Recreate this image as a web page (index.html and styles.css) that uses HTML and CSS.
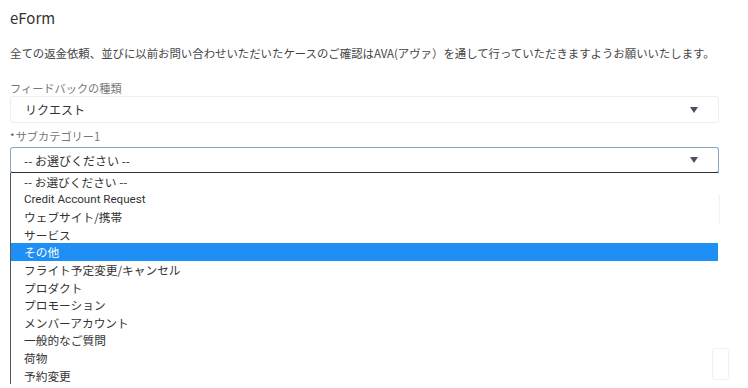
FILE: index.html
```html
<!DOCTYPE html>
<html lang="ja">
<head>
<meta charset="utf-8">
<link rel="stylesheet" href="styles.css">
</head>
<body>
<div class="page">
  <h1 class="title">eForm</h1>
  <p class="notice">全ての返金依頼、並びに以前お問い合わせいただいたケースのご確認はAVA(アヴァ）を通して行っていただきますようお願いいたします。</p>
  <div class="field">
    <label class="label">フィードバックの種類</label>
    <div class="select">
      <span>リクエスト</span>
      <span class="arrow"></span>
    </div>
  </div>
  <div class="field field-2">
    <label class="label"><span class="req">*</span>サブカテゴリー1</label>
    <div class="select select-focus">
      <span>-- お選びください --</span>
      <span class="arrow"></span>
    </div>
    <div class="behind"></div>
    <ul class="options">
      <li>-- お選びください --</li>
      <li class="latin">Credit Account Request</li>
      <li>ウェブサイト/携帯</li>
      <li>サービス</li>
      <li class="active">その他</li>
      <li>フライト予定変更/キャンセル</li>
      <li>プロダクト</li>
      <li>プロモーション</li>
      <li>メンバーアカウント</li>
      <li>一般的なご質問</li>
      <li>荷物</li>
      <li>予約変更</li>
    </ul>
  </div>
  <div class="corner"></div>
</div>
</body>
</html>
```
FILE: styles.css
```css
html, body {
  margin: 0;
  padding: 0;
  background: #fff;
  overflow: hidden;
}
body {
  width: 748px;
  height: 388px;
  font-family: "Noto Sans CJK JP", "Noto Sans", sans-serif;
  color: #333;
}
.page {
  position: relative;
  padding: 8px 29px 0 10px;
}
.title {
  margin: 0;
  font-size: 15px;
  font-weight: 400;
  line-height: 20px;
  color: #333;
}
.notice {
  margin: 16px 0 0;
  font-size: 11.4px;
  line-height: 18px;
  color: #444;
  white-space: nowrap;
}
.field {
  margin-top: 18px;
}
.field-2 {
  margin-top: 5px;
  position: relative;
}
.label {
  display: block;
  font-size: 11.2px;
  line-height: 16px;
  color: #777;
}
.req {
  color: #555;
  font-size: 10px;
  margin-right: 1px;
}
.select {
  margin-top: 0;
  height: 25px;
  border: 1px solid #eee;
  border-radius: 3px;
  display: flex;
  align-items: center;
  justify-content: space-between;
  padding: 0 20px 0 14px;
  font-size: 12px;
  color: #333;
}
.select-focus {
  margin-top: 2px;
  border-color: #8aa7c4 #8aa7c4 #333 #8aa7c4;
  border-width: 1px 1px 2px 1px;
  height: 24px;
  padding-left: 13px;
}
.arrow {
  width: 0;
  height: 0;
  border-left: 4.5px solid transparent;
  border-right: 4.5px solid transparent;
  border-top: 6px solid #4a5160;
}
.behind {
  position: absolute;
  right: -1px;
  top: 66px;
  width: 4px;
  height: 28px;
  border: 1px solid #f2f2f2;
  border-left: none;
  border-radius: 0 3px 3px 0;
}
.options {
  position: absolute;
  left: 0;
  right: 1px;
  top: 45px;
  margin: 0;
  padding: 0;
  list-style: none;
  background: #fff;
  border-left: 1px solid #555;
  font-size: 11.7px;
  color: #333;
}
.options li {
  height: 17.6px;
  line-height: 17.6px;
  padding-left: 13px;
  white-space: nowrap;
}
.options li.latin {
  font-family: Roboto, "Noto Sans CJK JP", sans-serif;
  font-size: 11.6px;
}
.options li.active {
  background: #1e8ff5;
  color: #fff;
}
.corner {
  position: absolute;
  left: 712px;
  top: 348px;
  width: 15px;
  height: 30px;
  border: 1px solid #f0f0f0;
  border-radius: 3px;
}
```
